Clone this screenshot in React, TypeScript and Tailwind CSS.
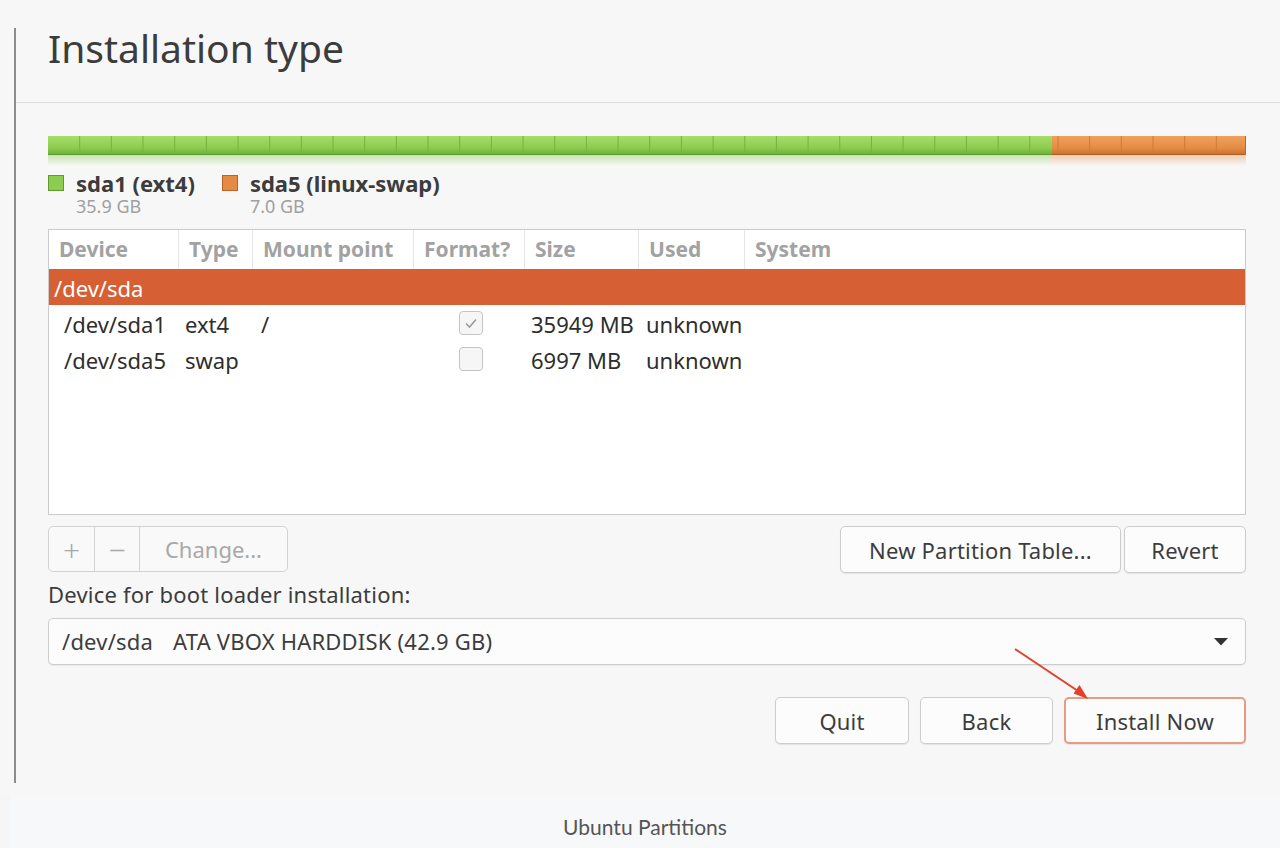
import React from "react";

const cols = "grid grid-cols-[130px_74px_161px_111px_114px_106px_1fr]";

function PartitionBar() {
  const seg = 31.67;
  const greenW = 1004;
  const total = 1198;
  const greenLines: number[] = [];
  for (let x = seg; x < greenW - 2; x += seg) greenLines.push(x);
  const orangeLines: number[] = [];
  for (let x = greenW + 6; x < total - 2; x += seg) orangeLines.push(x);

  return (
    <svg width={total} height={30} className="block">
      <defs>
        <linearGradient id="g" x1="0" y1="0" x2="0" y2="1">
          <stop offset="0" stopColor="#a6de6c" />
          <stop offset="0.6" stopColor="#8ccd4f" />
          <stop offset="1" stopColor="#6fae3b" />
        </linearGradient>
        <linearGradient id="o" x1="0" y1="0" x2="0" y2="1">
          <stop offset="0" stopColor="#efa15c" />
          <stop offset="0.6" stopColor="#e68d45" />
          <stop offset="1" stopColor="#c9712e" />
        </linearGradient>
        <linearGradient id="gr" x1="0" y1="0" x2="0" y2="1">
          <stop offset="0" stopColor="#8fcf55" stopOpacity="0.45" />
          <stop offset="1" stopColor="#8fcf55" stopOpacity="0" />
        </linearGradient>
        <linearGradient id="or" x1="0" y1="0" x2="0" y2="1">
          <stop offset="0" stopColor="#e68d45" stopOpacity="0.4" />
          <stop offset="1" stopColor="#e68d45" stopOpacity="0" />
        </linearGradient>
      </defs>
      <rect x={0} y={0} width={greenW} height={19} fill="url(#g)" />
      <rect x={greenW} y={0} width={total - greenW} height={19} fill="url(#o)" />
      {greenLines.map((x) => (
        <line key={"g" + x} x1={x} y1={0} x2={x} y2={19} stroke="#74b341" strokeWidth={1} />
      ))}
      {orangeLines.map((x) => (
        <line key={"o" + x} x1={x} y1={0} x2={x} y2={19} stroke="#cf7a36" strokeWidth={1} />
      ))}
      <line x1={0} y1={18.5} x2={greenW} y2={18.5} stroke="#5f9830" />
      <line x1={greenW} y1={18.5} x2={total} y2={18.5} stroke="#a85d24" />
      <line x1={total - 0.5} y1={0} x2={total - 0.5} y2={19} stroke="#b8682a" />
      <rect x={0} y={19} width={greenW} height={11} fill="url(#gr)" />
      <rect x={greenW} y={19} width={total - greenW} height={11} fill="url(#or)" />
    </svg>
  );
}

function Checkbox({ checked }: { checked: boolean }) {
  return (
    <div className="w-[24px] h-[24px] rounded-[4px] border border-[#c4c4c4] bg-[#f6f6f6] flex items-center justify-center">
      {checked && (
        <svg width="14" height="14" viewBox="0 0 14 14">
          <polyline points="2,7.5 5.5,11 12,3.5" fill="none" stroke="#9a9a9a" strokeWidth="1.6" />
        </svg>
      )}
    </div>
  );
}

function Btn({ children, w, accent }: { children: React.ReactNode; w: string; accent?: boolean }) {
  return (
    <div
      className={`${w} h-[47px] rounded-[5px] flex items-center justify-center bg-[#fcfcfc] text-[22px] tracking-[0.2px] text-[#3c3c3c] shadow-[0_1px_1px_rgba(0,0,0,0.08)] ${
        accent ? "border-2 border-[#e79a84]" : "border border-[#cdcdcd]"
      }`}
    >
      <span className="pt-[1px]">{children}</span>
    </div>
  );
}

const rows = [
  { dev: "/dev/sda1", type: "ext4", mount: "/", fmt: true, size: "35949 MB", used: "unknown" },
  { dev: "/dev/sda5", type: "swap", mount: "", fmt: false, size: "6997 MB", used: "unknown" },
];

export default function App() {
  const headers = ["Device", "Type", "Mount point", "Format?", "Size", "Used", "System"];

  return (
    <div className="relative w-[1280px] h-[848px] bg-[#f6f6f6] font-['Noto_Sans',sans-serif] text-[#3c3c3c] overflow-hidden">
      {/* screenshot */}
      <div className="h-[795px] pt-[28px] bg-[#f7f7f7]">
        <div className="ml-[14px] h-[755px] border-l-2 border-[#8c8c8c]">
          {/* title */}
          <div className="h-[75px] border-b border-[#dedede] pl-[32px]">
            <h1 className="text-[39px] leading-[40px] font-normal text-[#3c3c3c]">Installation type</h1>
          </div>

          <div className="pl-[32px] pr-[34px]">
            {/* partition bar */}
            <div className="mt-[33px]">
              <PartitionBar />
            </div>

            {/* legend */}
            <div className="mt-[4px] flex gap-[27px]">
              <div>
                <div className="flex items-center gap-[12px] h-[26px]">
                  <div className="w-[16px] h-[16px] bg-[#8ccd4f] border border-[#5f9a2f]" />
                  <span className="text-[22px] font-bold leading-[26px]">sda1 (ext4)</span>
                </div>
                <div className="pl-[28px] text-[18px] leading-[20px] text-[#a0a0a0]">35.9 GB</div>
              </div>
              <div>
                <div className="flex items-center gap-[12px] h-[26px]">
                  <div className="w-[16px] h-[16px] bg-[#e68a42] border border-[#b8642a]" />
                  <span className="text-[22px] font-bold leading-[26px]">sda5 (linux-swap)</span>
                </div>
                <div className="pl-[28px] text-[18px] leading-[20px] text-[#a0a0a0]">7.0 GB</div>
              </div>
            </div>

            {/* table */}
            <div className="mt-[13px] h-[286px] bg-white border border-[#cbcbcb]">
              <div className={`${cols} h-[39px]`}>
                {headers.map((h, i) => (
                  <div
                    key={h}
                    className={`flex items-center pl-[10px] text-[21px] font-bold text-[#a2a2a2] ${
                      i < headers.length - 1 ? "border-r border-[#e6e6e6]" : ""
                    }`}
                  >
                    {h}
                  </div>
                ))}
              </div>
              <div className="h-[36px] bg-[#d65f33] text-white text-[22px] flex items-center pl-[5px] pt-[2px]">/dev/sda</div>
              {rows.map((r) => (
                <div key={r.dev} className={`${cols} h-[36px] text-[22px] text-[#2e2e2e]`}>
                  <div className="flex items-center pl-[15px] pt-[2px]">{r.dev}</div>
                  <div className="flex items-center pl-[6px] pt-[2px]">{r.type}</div>
                  <div className="flex items-center pl-[8px] pt-[2px]">{r.mount}</div>
                  <div className="flex items-center justify-center pl-[2px]">
                    <Checkbox checked={r.fmt} />
                  </div>
                  <div className="flex items-center pl-[6px] pt-[2px]">{r.size}</div>
                  <div className="flex items-center pl-[7px] pt-[2px]">{r.used}</div>
                  <div />
                </div>
              ))}
            </div>

            {/* table buttons */}
            <div className="mt-[11px] flex justify-between">
              <div className="flex h-[46px] rounded-[5px] border border-[#d2d2d2] bg-[#f9f9f9] text-[#a8a8a8] text-[22px]">
                <div className="w-[46px] flex items-center justify-center border-r border-[#d2d2d2] text-[30px] font-light">+</div>
                <div className="w-[45px] flex items-center justify-center border-r border-[#d2d2d2] text-[30px] font-light">−</div>
                <div className="w-[147px] flex items-center justify-center pt-[1px]">Change...</div>
              </div>
              <div className="flex gap-[3px]">
                <Btn w="w-[281px]">New Partition Table...</Btn>
                <Btn w="w-[122px]">Revert</Btn>
              </div>
            </div>

            {/* boot loader */}
            <div className="mt-[8px] text-[22px] leading-[26px] tracking-[0.2px]">Device for boot loader installation:</div>
            <div className="mt-[11px] h-[47px] rounded-[5px] border border-[#cdcdcd] bg-[#fcfcfc] flex items-center pl-[13px] pr-[17px] text-[22px] tracking-[0.2px] shadow-[0_1px_1px_rgba(0,0,0,0.06)]">
              <span>/dev/sda</span>
              <span className="ml-[20px]">ATA VBOX HARDDISK (42.9 GB)</span>
              <span className="ml-auto">
                <svg width="14" height="8" viewBox="0 0 14 8">
                  <polygon points="0,0 14,0 7,7.5" fill="#333" />
                </svg>
              </span>
            </div>

            {/* navigation */}
            <div className="mt-[32px] flex justify-end gap-[11px]">
              <Btn w="w-[134px]">Quit</Btn>
              <Btn w="w-[133px]">Back</Btn>
              <Btn w="w-[182px]" accent>
                Install Now
              </Btn>
            </div>
          </div>
        </div>
      </div>

      {/* caption */}
      <div className="ml-[10px] h-[53px] bg-[#f7f8f9] pt-[19px] text-center font-['Lato',sans-serif] text-[21px] leading-[26px] text-[#555]">
        Ubuntu Partitions
      </div>

      {/* annotation arrow */}
      <svg className="absolute left-[1009px] top-[643px]" width="90" height="64" viewBox="0 0 90 64">
        <line x1="6" y1="6" x2="72" y2="50" stroke="#e2402a" strokeWidth="2" />
        <polygon points="79,56 64.5,50.5 70.5,42" fill="#e2402a" />
      </svg>
    </div>
  );
}
